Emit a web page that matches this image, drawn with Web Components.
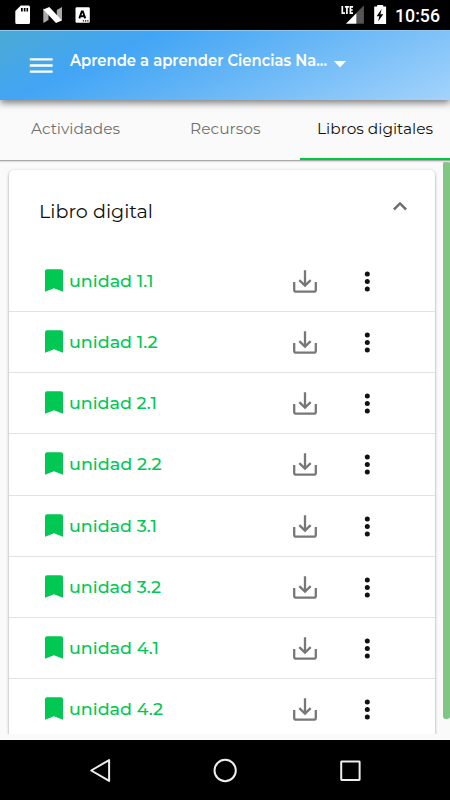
<!DOCTYPE html>
<html lang="es">
<head>
<meta charset="utf-8">
<title>Libros digitales</title>
<style>
body{margin:0;width:450px;height:800px;overflow:hidden;background:#fafafa;font-family:Montserrat,Inter,sans-serif}
</style>
</head>
<body>
<book-app></book-app>
<script>
const define = (name, html, setup) => {
  customElements.define(name, class extends HTMLElement {
    connectedCallback() {
      if (this.shadowRoot) return;
      const t = document.createElement('template');
      t.innerHTML = html;
      this.attachShadow({mode: 'open'}).append(t.content.cloneNode(true));
      if (setup) setup(this, this.shadowRoot);
    }
  });
};

/* One line of text, stretched horizontally to the width given in "w". */
define('fit-text', `<style>
:host{display:block;white-space:nowrap;line-height:24px;height:24px}
span{display:inline-block;transform-origin:0 50%}
</style><span></span>`, (host, root) => {
  const s = root.querySelector('span');
  s.textContent = host.getAttribute('text');
  const w = +host.getAttribute('w');
  host.style.width = w + 'px';
  s.style.transform = `scaleX(${w / s.getBoundingClientRect().width})`;
});

define('status-bar', `<style>
:host{display:flex;box-sizing:border-box;height:30px;padding:0 10px 0 15px;background:#000;align-items:center;color:#fff;font-family:Roboto,sans-serif}
.sp{flex:1}
svg{display:block}
fit-text{font-size:18px;font-weight:500;margin-top:1px}
</style>
<svg width="78" height="30" viewBox="0 0 78 30">
 <path fill="#fff" fill-rule="evenodd" d="M5.800 5.500H13.500a1.500 1.500 0 0 1 1.500 1.500v15.600a1.500 1.500 0 0 1-1.500 1.500H1.800a1.500 1.500 0 0 1-1.500-1.500V11zM6 8v3.500h1.700V8zm2.800 0v3.500h1.700V8zm2.700 0v3.500h1.600V8z"/>
 <path fill="#aaa" d="M28.300 8.500l5.200 4v7.500l-5.200 3zM47 7v13.500l-5.200-4V10z"/>
 <path fill="#fff" d="M28.300 9.500L34.300 7 47 20.500 41 23z"/>
 <rect x="60.500" y="7.200" width="14.300" height="15.600" rx="1.300" fill="#fff"/>
 <path fill="none" stroke="#000" stroke-width="1.900" d="M64.300 18.300l2.500-6.800h1l2.500 6.800M65.300 16.300h4"/>
 <path stroke="#000" stroke-width="1.200" stroke-dasharray="1.300 .9" d="M67.800 20.800h6"/>
</svg>
<div class="sp"></div>
<svg width="55" height="30" viewBox="0 0 55 30">
 <path fill="none" stroke="#fff" stroke-width="1.700" d="M2.300 6v7.200h2.700M4.900 6.900h4M6.900 6.900V14M13 6.900h-2.600V13.200H13M10.400 10h2.300"/>
 <path fill="#555" d="M23.900 5.500v18.300h-8V13.300z"/>
 <path fill="#fff" d="M16.300 13.300v10.500H5.900z"/>
 <path fill="#fff" d="M34.200 6.500h3V5h6v1.500h2.900V24H34.200z"/>
 <path fill="#000" d="M41.600 9l-5 7.200h2.700L38.100 21.500l5.200-7.300h-2.900z"/>
</svg>
<fit-text w="45" text="10:56"></fit-text>`);

define('app-header', `<style>
:host{display:flex;box-sizing:border-box;height:70px;padding:18px 0 0 28px;align-items:flex-start;color:#fff;position:relative;z-index:2;
background:linear-gradient(155deg,#4baad4 0%,#42a5f5 27%,#64b5f6 54%,#a3d3fb 100%);box-shadow:0 3px 7px rgba(0,0,0,.5),inset 0 1px #8cc8f2}
svg{display:block}
fit-text{font-size:15.500px;font-weight:600;margin:.6px 0 0 17px}
.menu{margin-top:6px}
.caret{margin:13px 0 0 7px}
</style>
<svg class="menu" width="25" height="22" viewBox="0 0 25 22"><path stroke="#fff" stroke-width="2.300" d="M1.800 5.300H24.600M1.800 11.500H24.600M1.800 17.700H24.600"/></svg>
<fit-text w="257" text="Aprende a aprender Ciencias Na..."></fit-text>
<svg class="caret" width="12" height="7" viewBox="0 0 12 7"><path fill="#fff" d="M0 0h12L6 6.500z"/></svg>`);

define('tab-item', `<style>
:host{flex:1;display:flex;justify-content:center;box-sizing:border-box;height:60px;padding-top:17px;color:#707070;font-size:15px}
:host([active]){color:#111;border-bottom:2.500px solid #00c843}
</style><slot></slot>`);

define('tab-bar', `<style>
:host{display:flex;height:60px;background:#fafafa;border-bottom:1px solid #aaa;box-shadow:0 1px 1px #ddd;position:relative;z-index:1}
</style><slot></slot>`);

define('unit-row', `<style>
:host{display:flex;box-sizing:border-box;height:61.250px;padding-left:36px;align-items:center;border-bottom:1.250px solid #e2e2e2;color:#00c853;font-size:17px;font-weight:500}
svg{display:block;flex:none}
.name{width:219px;margin-left:6px}
.dots{margin-left:44px}
</style>
<svg width="18" height="24" viewBox="0 0 18 24"><path fill="#00c853" d="M2 .3h14a2 2 0 0 1 2 2v20.500l-9-3.500-9 3.500V2.300a2 2 0 0 1 2-2z"/></svg>
<div class="name"></div>
<svg style="margin-left:5px" width="24" height="24" viewBox="0 0 24 24" fill="none" stroke="#777" stroke-width="2.300"><path d="M1.200 13v7.700a2 2 0 0 0 2 2h17.600a2 2 0 0 0 2-2V13M12 1.300V16.300M6.300 11.200l5.700 5.500 5.700-5.500"/></svg>
<svg class="dots" width="12" height="24" viewBox="0 0 12 24" fill="#111"><circle cx="6.300" cy="5" r="2.500"/><circle cx="6.300" cy="12.500" r="2.500"/><circle cx="6.300" cy="20" r="2.500"/></svg>`,
(host, root) => {
  const f = document.createElement('fit-text');
  f.setAttribute('w', host.getAttribute('w'));
  f.setAttribute('text', host.getAttribute('name'));
  root.querySelector('.name').append(f);
});

define('book-card', `<style>
:host{display:block;height:571px;margin:0 0 0 9px;width:426px;background:#fff;border-radius:5px;box-shadow:0 1px 3px rgba(0,0,0,.4)}
header{display:flex;box-sizing:border-box;height:80.500px;padding:30px 28px 0 29.500px;justify-content:space-between;color:#111;font-size:18.300px}
svg{margin-top:1px}
</style>
<header><fit-text w="114" text="Libro digital"></fit-text>
<svg width="14" height="10" viewBox="0 0 14 10"><path fill="none" stroke="#707070" stroke-width="2.500" d="M.900 8.500L7 2.400l6.100 6.100"/></svg></header>
<slot></slot>`);

define('scroll-area', `<style>
:host{display:flex;justify-content:space-between;height:573px;overflow:hidden;background:#fafafa}
.list{height:573px;overflow:hidden;width:438px;padding-top:9px;box-sizing:border-box}
.thumb{width:7px;height:557.500px;background:#81c784;border-radius:3px}
</style><div class="list"><slot></slot></div><div class="thumb"></div>`);

define('nav-bar', `<style>
:host{display:flex;height:60px;margin-top:6px;padding:0 37px;background:#000;align-items:center;justify-content:space-between}
svg{width:126px;height:60px;display:block;fill:none;stroke:#eee;stroke-width:2}
</style>
<svg viewBox="0 0 126 60"><path stroke-linejoin="round" d="M72.500 20v21L54.500 30.500z"/></svg>
<svg viewBox="0 0 126 60"><circle cx="63.500" cy="30.500" r="10.700"/></svg>
<svg viewBox="0 0 126 60"><rect x="53.500" y="21.500" width="18.500" height="18.500" rx=".5"/></svg>`);

define('book-app', `<style>:host{display:block;width:450px;height:800px}</style>
<status-bar></status-bar>
<app-header></app-header>
<tab-bar>
<tab-item><fit-text w="89" text="Actividades"></fit-text></tab-item>
<tab-item><fit-text w="70.500" text="Recursos"></fit-text></tab-item>
<tab-item active><fit-text w="116" text="Libros digitales"></fit-text></tab-item>
</tab-bar>
<scroll-area><book-card>
<unit-row name="unidad 1.1" w="84.500"></unit-row>
<unit-row name="unidad 1.2" w="88.500"></unit-row>
<unit-row name="unidad 2.1" w="88"></unit-row>
<unit-row name="unidad 2.2" w="92.500"></unit-row>
<unit-row name="unidad 3.1" w="88"></unit-row>
<unit-row name="unidad 3.2" w="92"></unit-row>
<unit-row name="unidad 4.1" w="90"></unit-row>
<unit-row name="unidad 4.2" w="94"></unit-row>
</book-card></scroll-area>
<nav-bar></nav-bar>`);
</script>
</body>
</html>
